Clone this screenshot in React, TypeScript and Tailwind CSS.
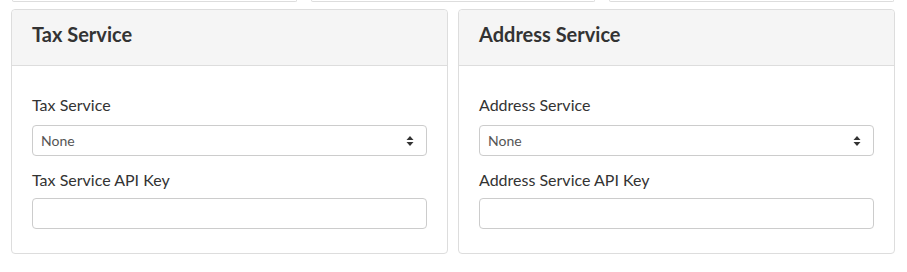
const FONT = "font-['Lato','Segoe_UI','Liberation_Sans',sans-serif]";

function SortArrows() {
  return (
    <svg width="8" height="12" viewBox="0 0 8 12" className="shrink-0 text-[#333]" aria-hidden>
      <path d="M4 1 L7.5 5 H0.5 Z" fill="currentColor" />
      <path d="M4 11 L7.5 7 H0.5 Z" fill="currentColor" />
    </svg>
  );
}

type ServicePanelProps = {
  title: string;
};

function ServicePanel({ title }: ServicePanelProps) {
  return (
    <div className="flex-1 rounded border border-[#ddd] bg-white">
      {/* Header */}
      <div className="flex h-[56px] items-center rounded-t border-b border-[#ddd] bg-[#f5f5f5] px-5 pb-[7px]">
        <h2 className="text-[20px] font-bold text-[#333]">{title}</h2>
      </div>

      {/* Body */}
      <div className="px-5 pb-6 pt-[27px]">
        <label className="block text-[16px] leading-6 text-[#333]">{title}</label>
        <div className="mt-[8px] flex h-[31px] items-center justify-between rounded border border-[#ccc] bg-white pl-2 pr-3">
          <span className="text-[14px] text-[#555]">None</span>
          <SortArrows />
        </div>

        <label className="mt-[12px] block text-[16px] leading-6 text-[#333]">{title} API Key</label>
        <input
          type="text"
          className="mt-[6px] block h-[31px] w-full rounded border border-[#ccc] bg-white px-2 text-[14px] focus:outline-none"
        />
      </div>
    </div>
  );
}

export default function App() {
  return (
    <div className={`h-[272px] w-[907px] bg-white ${FONT}`}>
      {/* Bottoms of the panels above */}
      <div className="flex gap-[14px] pl-[12px] pr-[13px]">
        <div className="h-[2px] flex-1 rounded-b border-x border-b border-[#ddd]" />
        <div className="h-[2px] flex-1 rounded-b border-x border-b border-[#ddd]" />
        <div className="h-[2px] flex-1 rounded-b border-x border-b border-[#ddd]" />
      </div>

      <div className="mt-[7px] flex gap-[10px] pl-[11px] pr-[12px]">
        <ServicePanel title="Tax Service" />
        <ServicePanel title="Address Service" />
      </div>
    </div>
  );
}
